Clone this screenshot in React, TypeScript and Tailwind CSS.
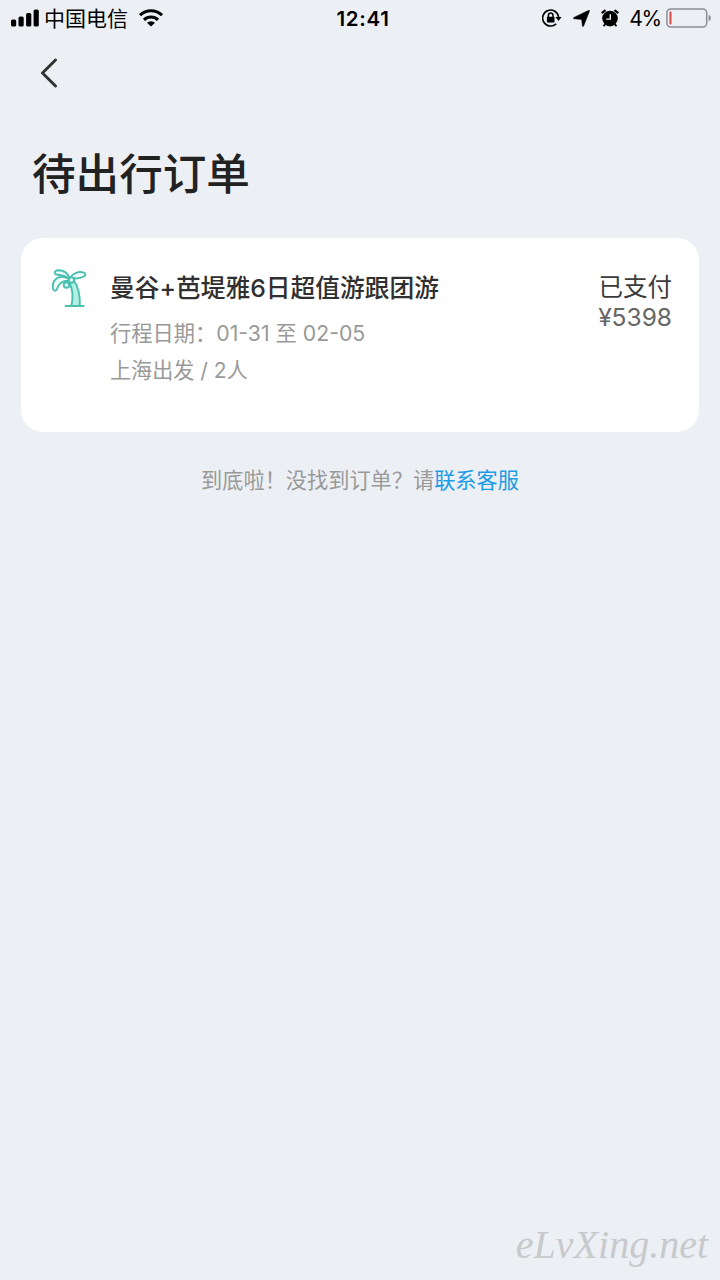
import React from 'react';

interface Order {
  id: string;
  title: string;
  dates: string;
  departure: string;
  status: string;
  price: string;
}

const orders: Order[] = [
  {
    id: 'bangkok',
    title: '曼谷+芭堤雅6日超值游跟团游',
    dates: '行程日期：01-31 至 02-05',
    departure: '上海出发 / 2人',
    status: '已支付',
    price: '¥5398',
  },
];

const SignalIcon = () => (
  <svg className="w-7 h-[18px]" viewBox="0 0 28 18">
    <rect x="0" y="10.5" width="5.2" height="7" rx="1.6" />
    <rect x="7.5" y="7.5" width="5.2" height="10" rx="1.6" />
    <rect x="15.1" y="4" width="5.2" height="13.5" rx="1.6" />
    <rect x="22.6" y="0.5" width="5.2" height="17" rx="1.6" />
  </svg>
);

const WifiIcon = () => (
  <svg className="w-6 h-[18px]" viewBox="0 0 24 18" fill="none" stroke="currentColor" strokeWidth="3.2">
    <path d="M1 6.2a15.8 15.8 0 0 1 22 0" />
    <path d="M5 10.8a10.2 10.2 0 0 1 14 0" />
    <path d="M12 17.6L8 13.8a5.8 5.8 0 0 1 8 0z" fill="currentColor" stroke="none" />
  </svg>
);

const RotationLockIcon = () => (
  <svg className="w-5 h-[18px]" viewBox="0 0 20 18" fill="none" stroke="currentColor" strokeWidth="1.6">
    <path d="M14.2 14.8A8 8 0 1 1 16.6 8" />
    <path d="M13.4 8h6.2l-3.1 3.9z" fill="currentColor" stroke="none" />
    <rect x="4.9" y="7.7" width="7.6" height="5.8" rx="0.8" fill="currentColor" stroke="none" />
    <path d="M6.4 8.4V6.4a2.3 2.3 0 0 1 4.6 0v2" strokeWidth="1.5" />
  </svg>
);

const LocationIcon = () => (
  <svg className="w-[17px] h-[17px]" viewBox="0 0 17 17">
    <path
      d="M16.4 1.2L10.6 16c-.3.7-1.1.6-1.2-.1L8.7 9.4 1.1 8.7C.3 8.6.2 7.8.9 7.5L15.5.4c.6-.3 1.2.1.9.8z"
      stroke="currentColor"
      strokeWidth="0.6"
    />
  </svg>
);

const AlarmIcon = () => (
  <svg className="w-[18px] h-[18px]" viewBox="0 0 18 18">
    <circle cx="9" cy="9.6" r="7.8" />
    <path d="M1.4 3.6L3.8 1.6M16.6 3.6l-2.4-2" stroke="currentColor" strokeWidth="2.2" strokeLinecap="round" />
    <path d="M3.8 15.6l-.8 1M14.2 15.6l.8 1" stroke="currentColor" strokeWidth="1.8" strokeLinecap="round" />
    <path d="M9.3 5.2v4.9H5.2" fill="none" stroke="#ecf0f5" strokeWidth="1.4" />
  </svg>
);

const BatteryIcon = () => (
  <svg className="w-[46px] h-5" viewBox="0 0 46 20">
    <rect x="0.9" y="0.9" width="39.8" height="18.2" rx="4" fill="none" stroke="#8b8d91" strokeWidth="1.5" />
    <rect x="3.4" y="3.6" width="2.2" height="12.8" rx="1" fill="#e0524f" />
    <path d="M42.6 6.8c3 1 3 5.4 0 6.4z" fill="#8b8d91" />
  </svg>
);

const PalmIcon = () => (
  <svg
    className="w-9 h-10"
    viewBox="0 0 36 40"
    fill="#b2f0e4"
    stroke="#4bbfb0"
    strokeWidth="1.9"
    strokeLinecap="round"
    strokeLinejoin="round"
  >
    <path d="M18.6 15.5C22 22 22.3 30 20.2 38H28.8C29.3 28 27.6 19 22.6 12z" />
    <path d="M18.4 9.6C16.5 5.2 12.5 2.4 7.5 2.3c-3.2.1-4.4 1.6-3.6 3.2 1 1.6 3 1 5 1.5 3.5.5 6.2 1.4 8.7 3.4z" fill="#effcf9" />
    <path d="M19.6 9.2C22 5.4 27.5 3.2 32.2 4.4c2.6.8 3 3 .8 4.1-3.4 1.9-6.7 2.2-10.6 1.8z" fill="#effcf9" />
    <path d="M17.6 10.6C9.8 6.4 3 10.1 1.9 16.6c-.5 3.6.5 6.3 2.3 6.3 2.1-.2 1.7-3.1 3.5-5.6 2.2-3.1 6-4.6 9.9-4.6z" fill="#effcf9" />
    <circle cx="15.5" cy="17" r="2.8" fill="#e4faf5" />
    <circle cx="20.4" cy="12" r="2.7" fill="#e4faf5" />
    <path d="M14.6 38h18" />
  </svg>
);

const StatusBar = () => (
  <header className="grid grid-cols-[1fr_auto_1fr] items-center h-9 pl-[11px] pr-2 text-[21px] leading-[34px] text-black">
    <div className="flex items-center">
      <SignalIcon />
      <span className="ml-[5px] pt-[2px]">中国电信</span>
      <span className="ml-[11px]"><WifiIcon /></span>
    </div>
    <time className="pt-[2px] pl-[3px] font-semibold text-[20.5px] tracking-[0.7px]">12:41</time>
    <div className="flex items-center justify-end">
      <RotationLockIcon />
      <span className="ml-[11px]"><LocationIcon /></span>
      <span className="ml-[11px]"><AlarmIcon /></span>
      <span className="ml-[10px] mr-[5px] pt-[2px] tracking-[-1.2px]">4%</span>
      <BatteryIcon />
    </div>
  </header>
);

const OrderCard: React.FC<{ order: Order }> = ({ order }) => (
  <article className="flex items-start h-[194px] pl-[30px] pr-[27px] pt-[30px] bg-white rounded-[22px]">
    <PalmIcon />
    <div className="flex-1 ml-[23px]">
      <h2 className="text-[24.75px] leading-10 font-medium text-[#303030]">{order.title}</h2>
      <p className="mt-[7px] text-[21.25px] leading-[37px] text-[#999]">{order.dates}</p>
      <p className="text-[21.1px] leading-[37px] text-[#999]">{order.departure}</p>
    </div>
    <div className="mt-1 text-right text-[24.5px] leading-[30px]">
      <p className="text-[#3c3c3c]">{order.status}</p>
      <p className="text-[#666]">{order.price}</p>
    </div>
  </article>
);

const App: React.FC = () => {
  return (
    <div className="flex flex-col w-full h-[1280px] bg-[#ecf0f5] font-[Inter,'Noto_Sans_CJK_SC',sans-serif]">
      <StatusBar />
      <nav className="flex items-center h-[74px] pl-10">
        <button type="button" aria-label="返回" className="text-[#333]">
          <svg className="w-[18px] h-[30px]" viewBox="0 0 18 30" fill="none" stroke="currentColor" strokeWidth="3" strokeLinecap="round" strokeLinejoin="round">
            <path d="M15.5 2L2.5 15l13 13" />
          </svg>
        </button>
      </nav>
      <h1 className="mt-[34px] ml-8 text-[43.6px] leading-[62px] font-medium text-[#222]">待出行订单</h1>
      <main className="mt-8 px-[21px]">
        {orders.map(order => <OrderCard key={order.id} order={order} />)}
        <p className="mt-8 text-center text-[21.2px] leading-8 text-[#999]">
          到底啦！没找到订单？请<a href="#service" className="text-[#1c9be6]">联系客服</a>
        </p>
      </main>
      <footer className="mt-auto pr-3 pb-2 text-right text-[40px] leading-[54px] italic text-[#c8c9cb] font-['Liberation_Serif',serif]">
        eLvXing.net
      </footer>
    </div>
  );
};

export default App;
